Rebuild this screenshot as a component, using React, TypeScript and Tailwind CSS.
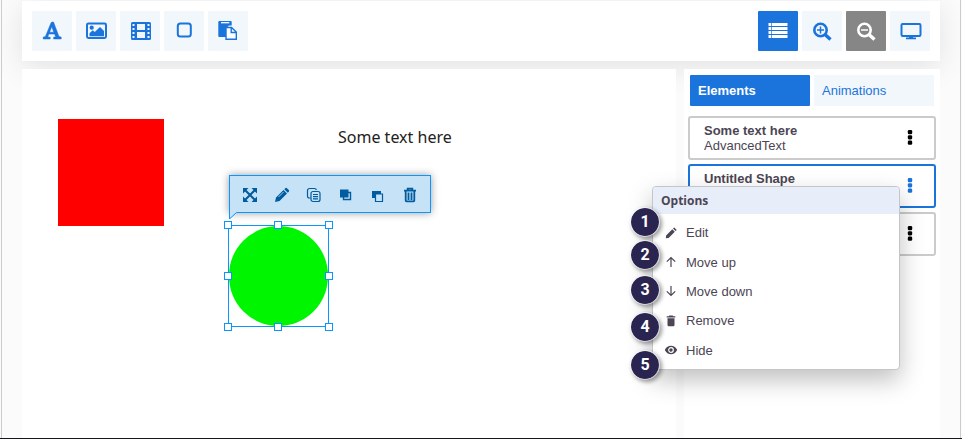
import type { ReactNode } from "react";

type IconProps = { children: ReactNode; size?: string; box?: string };

function Icon({ children, size = "size-6", box = "0 0 24 24" }: IconProps) {
  return (
    <svg className={size} viewBox={box} fill="none" stroke="currentColor" strokeWidth="2" aria-hidden="true">
      {children}
    </svg>
  );
}

const letterIcon = (
  <Icon>
    <path
      fill="currentColor"
      strokeWidth=".5"
      fillRule="evenodd"
      d="M11.700 3h1.800l5.500 14.600 2.200.5V20h-7.600v-1.700l2-.5-1-2.800H8.800l-1 2.900 2.400.4V20H3.200v-1.900l2.200-.6L10.700 4.600zM11.700 7.700 9.600 13.200h4.200z"
    />
  </Icon>
);

const imageIcon = (
  <Icon>
    <rect x="3" y="4.500" width="19" height="14.500" rx="1.400" />
    <circle cx="7.700" cy="8.700" r="2.100" fill="currentColor" stroke="none" />
    <path d="M5.500 17.300v-3l3.200-3 2 1.800L16 7.900l4 4v5.400z" fill="currentColor" stroke="none" />
  </Icon>
);

const filmIcon = (
  <Icon>
    <path
      fill="currentColor"
      stroke="none"
      fillRule="evenodd"
      d="M4.500 3h17A1.500 1.500 0 0 1 23 4.500v15a1.500 1.500 0 0 1-1.500 1.500h-17A1.500 1.500 0 0 1 3 19.500v-15A1.500 1.500 0 0 1 4.500 3zM4.500 5v2h2V5zM4.500 9v2h2V9zM4.500 13v2h2v-2zM4.500 17v2h2v-2zM9 5v6h8V5zM9 13v6h8v-6zM19.500 5v2h2V5zM19.500 9v2h2V9zM19.500 13v2h2v-2zM19.500 17v2h2v-2z"
    />
  </Icon>
);

const squareIcon = (
  <Icon>
    <rect x="5.800" y="4.500" width="13" height="13" rx="2.500" />
  </Icon>
);

const pasteIcon = (
  <Icon>
    <path d="M3.300 2h11.400a1 1 0 0 1 1 1v3.500H13L10 9.500V18H3.300a1 1 0 0 1-1-1V3a1 1 0 0 1 1-1z" fill="currentColor" stroke="none" />
    <path d="M5 3.700h8.300" stroke="white" strokeWidth="1.300" />
    <path d="M10 8.500h5.500l4.800 4.600v7.200H10zM15.200 8.500v5h5" fill="white" strokeWidth="1.400" />
  </Icon>
);

const listIcon = (
  <Icon>
    <path d="M2.500 5.500h2.800M2.500 9.500h2.800M2.500 13.500h2.800M2.500 17.500h2.800M6 5.500h15.500M6 9.500h15.500M6 13.500h15.500M6 17.500h15.500" strokeWidth="2.800" />
  </Icon>
);

const zoomInIcon = (
  <Icon>
    <circle cx="10.500" cy="11" r="6.200" strokeWidth="2.600" />
    <path d="m15 15.500 5.500 5" strokeWidth="3.400" />
    <path d="M7 11h7M10.500 7.500v7" strokeWidth="1.500" />
  </Icon>
);

const zoomOutIcon = (
  <Icon>
    <circle cx="10.500" cy="11" r="6.200" strokeWidth="2.600" />
    <path d="m15 15.500 5.500 5" strokeWidth="3.400" />
    <path d="M7 11h7" strokeWidth="1.500" />
  </Icon>
);

const screenIcon = (
  <Icon>
    <rect x="3.500" y="5" width="19" height="12" rx="1.200" />
    <path d="M11 17.500h4v1h3v1.700H8v-1.700h3z" fill="currentColor" stroke="none" />
  </Icon>
);

const insertTools = [
  { label: "Text", icon: letterIcon },
  { label: "Image", icon: imageIcon },
  { label: "Video", icon: filmIcon },
  { label: "Shape", icon: squareIcon },
  { label: "Paste", icon: pasteIcon },
];

const light = "bg-[#f2f7fc] text-[#1b74dc]";

const viewTools = [
  { label: "Element list", icon: listIcon, tone: "bg-[#1b74dc] text-white" },
  { label: "Zoom in", icon: zoomInIcon, tone: light },
  { label: "Zoom out", icon: zoomOutIcon, tone: "bg-[#868686] text-white" },
  { label: "Preview", icon: screenIcon, tone: light },
];

function ToolButton({ label, icon, tone }: { label: string; icon: ReactNode; tone: string }) {
  return (
    <button type="button" aria-label={label} className={`flex size-10 items-center justify-center rounded-[1px] ${tone}`}>
      {icon}
    </button>
  );
}

const shapeTools = [
  {
    label: "Resize",
    icon: (
      <Icon size="size-4" box="0 0 16 16">
        <path d="m3 3 10 10M13 3 3 13" />
        <path d="M1 1h5.500L1 6.500zM15 1v5.500L9.500 1zM1 15V9.500L6.500 15zM15 15H9.500L15 9.500z" fill="currentColor" stroke="none" />
      </Icon>
    ),
  },
  {
    label: "Edit shape",
    icon: (
      <Icon size="size-4" box="0 0 16 16">
        <path d="m1 15 1-4.500 7.500-7.500 3.500 3.500L5.500 14zM10.300 2.200l1-1a1.200 1.200 0 0 1 1.700 0l1.800 1.800a1.200 1.200 0 0 1 0 1.700l-1 1z" fill="currentColor" stroke="none" />
        <path d="m4.500 10 5-5" stroke="#c5e2f6" strokeWidth=".8" />
      </Icon>
    ),
  },
  {
    label: "Duplicate",
    icon: (
      <Icon size="size-4" box="0 0 16 16">
        <path d="M4.500 11H3.300A1.800 1.800 0 0 1 1.500 9.200V3.500a2 2 0 0 1 2-2h5A2 2 0 0 1 10.400 3" strokeWidth="1.200" />
        <rect x="5" y="4.500" width="9" height="10" rx="2" strokeWidth="1.200" />
        <path d="M7 7.500h5M7 9.700h5M7 11.900h5" strokeWidth="1.200" />
      </Icon>
    ),
  },
  {
    label: "Bring forward",
    icon: (
      <Icon size="size-4" box="0 0 16 16">
        <path d="M5.500 5.500h7v7h-7z" fill="#c5e2f6" strokeWidth="1.400" />
        <path d="M2 2.500h8.500v8H2z" fill="currentColor" stroke="none" />
      </Icon>
    ),
  },
  {
    label: "Send backward",
    icon: (
      <Icon size="size-4" box="0 0 16 16">
        <path d="M2 4h9v7H2z" fill="currentColor" stroke="none" />
        <path d="M5.500 7h7v7.500h-7z" fill="#c5e2f6" strokeWidth="1.200" />
      </Icon>
    ),
  },
  {
    label: "Delete shape",
    icon: (
      <Icon size="size-4" box="0 0 16 16">
        <path d="M2 3.700h12M5.700 3.500V1.700h4.600v1.800" strokeWidth="1.800" />
        <path d="M3.700 4v9.500q0 .8.800.8h7q.8 0 .8-.8V4M6.500 5.500v7.500M9.500 5.500v7.500" strokeWidth="1.800" />
      </Icon>
    ),
  },
];

const handles = [
  "-left-1 -top-1",
  "left-[46px] -top-1",
  "-right-1 -top-1",
  "-left-1 top-[47px]",
  "-right-1 top-[47px]",
  "-left-1 -bottom-1",
  "left-[46px] -bottom-1",
  "-right-1 -bottom-1",
];

function Canvas() {
  return (
    <main className="relative flex-1 overflow-hidden bg-white">
      <div className="absolute left-9 top-[50px] h-[107px] w-[106px] bg-[#ff0000]" />
      <p className="absolute left-[316px] top-14 whitespace-nowrap font-['Noto_Sans',sans-serif] text-base leading-6 text-[#222222]">
        Some text here
      </p>

      <div className="absolute left-[207px] top-[106px] flex h-[38px] w-[202px] items-center gap-4 border border-[#0a96ff] bg-[#c5e2f6] px-3 pt-[2px] text-[#005b9f] shadow-[0_0_8px_rgba(0,0,0,0.4)]">
        {shapeTools.map((tool) => (
          <button key={tool.label} type="button" aria-label={tool.label}>
            {tool.icon}
          </button>
        ))}
        <svg className="absolute -left-px top-[35px] h-2 w-2" viewBox="0 0 8 8" aria-hidden="true">
          <path d="M.5 0v8L7.500 1.500V0z" fill="#c5e2f6" />
          <path d="M.5 0v8L7.500 1.500" fill="none" stroke="#0a96ff" />
        </svg>
      </div>

      <div className="absolute left-[206px] top-[156px] h-[102px] w-[101px] border border-[#0a96ff]">
        <div className="size-full rounded-full bg-[#00f500]" />
        {handles.map((place) => (
          <span key={place} className={`absolute -m-px size-2 border border-[#0a96ff] bg-white ${place}`} />
        ))}
      </div>
    </main>
  );
}

const menuItems = [
  {
    label: "Edit",
    icon: <path d="m1.800 12.200.3-2.800 6.200-6.200 2.500 2.500-6.200 6.200zM9 2.500l1.200-1.100 2.500 2.500-1.200 1.100z" fill="currentColor" stroke="none" />,
  },
  { label: "Move up", icon: <path d="M7 12V3M2.800 6.700 7 2.500l4.200 4.200" strokeWidth="1.200" /> },
  { label: "Move down", icon: <path d="M7 2v9M2.800 7.300 7 11.500l4.200-4.200" strokeWidth="1.200" /> },
  {
    label: "Remove",
    icon: <path d="M5.300 1.500h3.400l.6.700h2v1.200H2.700V2.200h2zM3.500 4.300h7v6.700q0 1.200-1.200 1.200H4.700Q3.500 12.200 3.500 11z" fill="currentColor" stroke="none" />,
  },
  {
    label: "Hide",
    icon: (
      <>
        <path d="M.8 7c2.600-5.600 9.800-5.600 12.400 0-2.600 5.600-9.800 5.600-12.400 0z" fill="currentColor" stroke="none" />
        <circle cx="7" cy="7" r="2.300" stroke="white" strokeWidth="1.200" fill="currentColor" />
      </>
    ),
  },
];

const badges = [
  { n: 1, place: "top-5" },
  { n: 2, place: "top-[53px]" },
  { n: 3, place: "top-[88px]" },
  { n: 4, place: "top-[125px]" },
  { n: 5, place: "top-[163px]" },
];

function OptionsMenu() {
  return (
    <div className="absolute -left-[38px] top-5 z-10 w-[248px] rounded border border-[#c4c6c8] bg-white shadow-[0_10px_24px_rgba(0,0,0,0.25)]">
      <h2 className="rounded-t bg-[#e7eefa] px-2 font-['Open_Sans',sans-serif] text-xs font-bold leading-[27px]">
        Options
      </h2>
      <ul className="grid h-[155px] auto-rows-fr py-1">
        {menuItems.map((item) => (
          <li key={item.label} className="flex">
            <button type="button" className="flex flex-1 items-center gap-2 px-[11px] text-left">
              <Icon size="size-[14px]" box="0 0 14 14">
                {item.icon}
              </Icon>
              {item.label}
            </button>
          </li>
        ))}
      </ul>
      {badges.map(({ n, place }) => (
        <span
          key={n}
          className={`absolute -left-[23px] flex size-[30px] items-center justify-center rounded-full border border-white/60 bg-[#2a2450] bg-clip-padding font-['Roboto',sans-serif] text-base font-bold leading-6 text-white shadow-[2px_2px_4px_rgba(0,0,0,0.4)] ${place}`}
        >
          {n}
        </span>
      ))}
    </div>
  );
}

const elements = [
  { title: "Some text here", kind: "AdvancedText", selected: false },
  { title: "Untitled Shape", kind: "", selected: true },
  { title: "", kind: "", selected: false },
];

function ElementsPanel() {
  return (
    <aside className="w-64 bg-white px-1 pt-[6px] text-[13px] leading-[15px] text-[#4c4554]">
      <div role="tablist" className="flex gap-1 px-[2px]">
        <button type="button" role="tab" aria-selected="true" className="h-[31px] flex-1 rounded-[1px] bg-[#1b74dc] px-2 text-left font-bold text-white">
          Elements
        </button>
        <button type="button" role="tab" aria-selected="false" className="h-[31px] flex-1 bg-[#f2f7fc] px-2 text-left text-[#1b74dc]">
          Animations
        </button>
      </div>
      <ul className="mt-[10px] flex flex-col gap-1">
        {elements.map((element, index) => (
          <li
            key={index}
            className={`relative flex h-11 justify-between rounded-[3px] border-2 pl-[14px] pr-[18px] pt-[5px] ${element.selected ? "border-[#1b74dc]" : "border-[#cbcbcb]"}`}
          >
            <div>
              <p className="font-bold">{element.title}</p>
              <p>{element.kind}</p>
            </div>
            <button
              type="button"
              aria-label="Element options"
              className={`flex w-3 flex-col items-center pt-[6px] ${element.selected ? "text-[#1b74dc]" : "text-black"}`}
            >
              <svg className="h-4 w-[6px] fill-current" viewBox="0 0 6 16" aria-hidden="true">
                <rect x=".8" y="1" width="4.400" height="4.200" rx="1.300" />
                <rect x=".8" y="6.200" width="4.400" height="4.200" rx="1.300" />
                <rect x=".8" y="11.600" width="4.400" height="4.200" rx="1.300" />
              </svg>
            </button>
            {element.selected && <OptionsMenu />}
          </li>
        ))}
      </ul>
    </aside>
  );
}

export default function App() {
  return (
    <div className="flex min-h-screen flex-col border-b border-[#17131f] bg-[#fbfbfb] font-['Liberation_Sans',Arial,sans-serif]">
      <div className="mx-px flex flex-1 flex-col gap-2 overflow-hidden border-x border-[#cccccc] px-5 pt-px">
        <header className="flex justify-between bg-white p-[10px] shadow-[0_6px_30px_rgba(0,0,0,0.1)]">
          <div className="flex gap-1">
            {insertTools.map((tool) => (
              <ToolButton key={tool.label} label={tool.label} icon={tool.icon} tone={light} />
            ))}
          </div>
          <div className="flex gap-1">
            {viewTools.map((tool) => (
              <ToolButton key={tool.label} label={tool.label} icon={tool.icon} tone={tool.tone} />
            ))}
          </div>
        </header>
        <div className="relative flex flex-1 gap-2">
          <Canvas />
          <ElementsPanel />
        </div>
      </div>
    </div>
  );
}
